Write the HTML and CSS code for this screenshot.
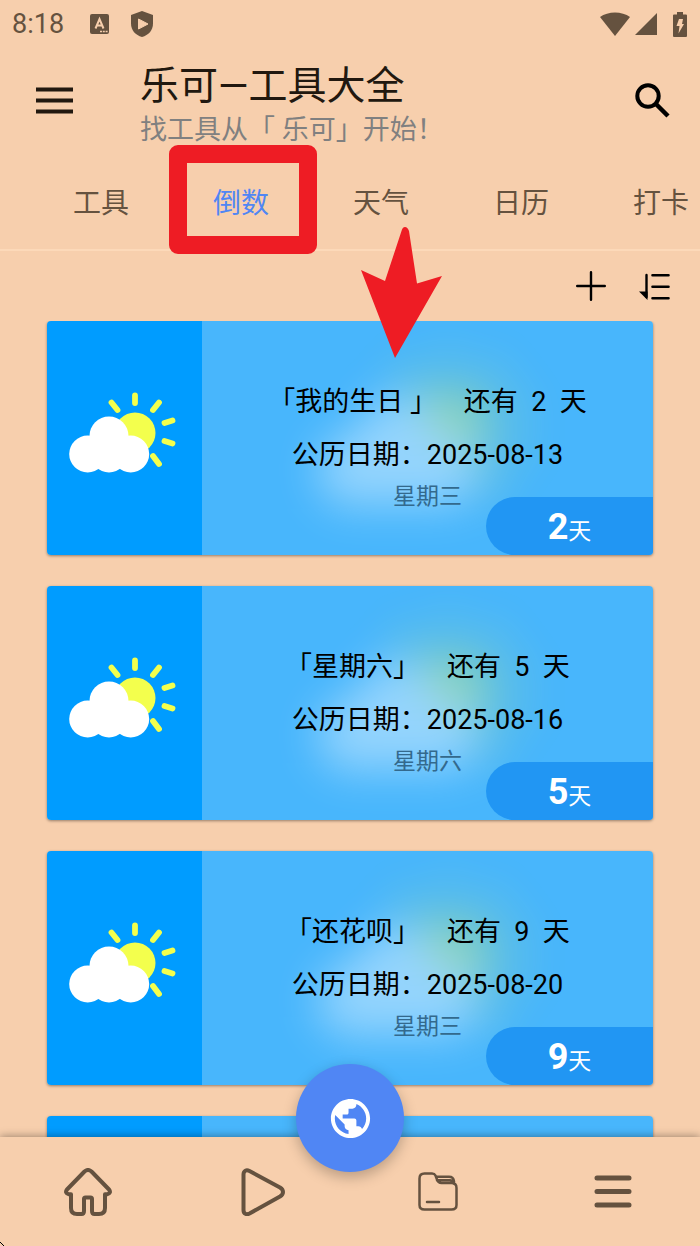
FILE: index.html
```html
<!DOCTYPE html>
<html lang="zh-CN">
<head>
<meta charset="utf-8">
<meta name="viewport" content="width=device-width, initial-scale=1">
<title>乐可—工具大全</title>
<link rel="stylesheet" href="styles.css">
</head>
<body>
<svg class="sprite" aria-hidden="true">
  <symbol id="weather" viewBox="0 0 111 92">
    <circle cx="66" cy="41" r="20.500" fill="#f3ff4d"/>
    <path d="M66 3.500v7.500M42.500 10.500l6 7.500M90 10.500l-6 7.500M103.500 28.500l-8 2.500M95.500 49l8 2.500M84 64l6 8" fill="none" stroke="#f3ff4d" stroke-width="5.800" stroke-linecap="round"/>
    <g fill="#fff"><circle cx="18.700" cy="62" r="18.500"/><circle cx="40" cy="44" r="19.500"/><circle cx="61.700" cy="62" r="18.500"/><circle cx="40" cy="62" r="18.500"/></g>
  </symbol>
</svg>
<div class="app">
  <div class="status">
    <span class="clock">8:18</span>
    <svg class="st-a" width="19" height="20" viewBox="0 0 19 20"><rect width="19" height="20" rx="2" fill="#65523f"/><path d="M5.500 14.500 9.500 5l4 9.500M7 11.500h5" fill="none" stroke="#f7cfad" stroke-width="2"/><path d="M10 17.500h8" stroke="#f7cfad" stroke-width="1.500" stroke-dasharray="2 .8"/></svg>
    <svg class="st-shield" width="24" height="28" viewBox="0 0 24 28"><path d="M12 1 23 5v8.500c0 7-4.500 11.500-11 13.500C5.500 25 1 20.500 1 13.500V5z" fill="#65523f"/><path d="M8.500 9v10l9.500-5z" fill="#f7cfad" stroke="#f7cfad" stroke-linejoin="round"/></svg>
    <svg class="st-wifi" width="30" height="24" viewBox="0 0 30 24"><path d="M0 5C8-1 22-1 30 5L15 24z" fill="#65523f"/></svg>
    <svg class="st-signal" width="22" height="22" viewBox="0 0 22 22"><path d="M22 0v22H0z" fill="#65523f"/></svg>
    <svg class="st-batt" width="14" height="25" viewBox="0 0 14 25"><path d="M4 0h6v2.500h3q1 0 1 1V24q0 1-1 1H1q-1 0-1-1V3.500q0-1 1-1h3z" fill="#65523f"/><path d="M6 7h4l-1 5h2L5.500 21.500 6.500 14H3.500z" fill="#f7cfad"/></svg>
  </div>
  <header class="header">
    <button class="icon-btn" aria-label="菜单"><svg width="37" height="27" viewBox="0 0 37 27"><path d="M0 2.500h37M0 13.500h37M0 24.500h37" stroke="#21180f" stroke-width="4"/></svg></button>
    <div class="heading">
      <h1>乐可—工具大全</h1>
      <p>找工具从「 乐可」开始&#xFF01;</p>
    </div>
    <button class="icon-btn" aria-label="搜索"><svg width="35" height="35" viewBox="0 0 35 35"><circle cx="13" cy="13" r="10.700" fill="none" stroke="#000" stroke-width="4"/><path d="M20.500 20.500 33 33" stroke="#000" stroke-width="4.500"/></svg></button>
  </header>
  <nav class="tabs">
    <a href="#tools">工具</a>
    <a href="#countdown" class="active" aria-current="page">倒数</a>
    <a href="#weather-tab">天气</a>
    <a href="#calendar">日历</a>
    <a href="#checkin">打卡</a>
  </nav>
  <div class="toolbar">
    <button class="icon-btn" aria-label="添加"><svg width="30" height="30" viewBox="0 0 30 30"><path d="M15 1.200v27.600M1.200 15h27.600" stroke="#000" stroke-width="2.400" stroke-linecap="round"/></svg></button>
    <button class="icon-btn" aria-label="排序"><svg width="31" height="27" viewBox="0 0 31 27"><path d="M13.500 2.200h16M13.500 13.700h16M13.500 25.200h16" stroke="#000" stroke-width="2.600" stroke-linecap="round"/><path d="M7.500 2v22" stroke="#000" stroke-width="2.400" stroke-linecap="round"/><path d="M0 18.500h8.500V27z" fill="#000"/></svg></button>
  </div>
  <main class="list">
    <article class="card">
      <div class="card-side"><svg class="weather"><use href="#weather"/></svg></div>
      <div class="card-main">
        <svg class="haze" aria-hidden="true"><use href="#weather"/></svg>
        <h2>「我的生日 」    还有  2  天</h2>
        <p class="date">公历日期&#xFF1A;2025-08-13</p>
        <p class="week">星期三</p>
        <div class="badge"><b>2</b><span>天</span></div>
      </div>
    </article>
    <article class="card">
      <div class="card-side"><svg class="weather"><use href="#weather"/></svg></div>
      <div class="card-main">
        <svg class="haze" aria-hidden="true"><use href="#weather"/></svg>
        <h2>「星期六」    还有  5  天</h2>
        <p class="date">公历日期&#xFF1A;2025-08-16</p>
        <p class="week">星期六</p>
        <div class="badge"><b>5</b><span>天</span></div>
      </div>
    </article>
    <article class="card">
      <div class="card-side"><svg class="weather"><use href="#weather"/></svg></div>
      <div class="card-main">
        <svg class="haze" aria-hidden="true"><use href="#weather"/></svg>
        <h2>「还花呗」    还有  9  天</h2>
        <p class="date">公历日期&#xFF1A;2025-08-20</p>
        <p class="week">星期三</p>
        <div class="badge"><b>9</b><span>天</span></div>
      </div>
    </article>
    <article class="card">
      <div class="card-side"></div>
      <div class="card-main"></div>
    </article>
  </main>
  <nav class="bottom">
    <a href="#home" aria-label="首页"><svg width="48" height="48" viewBox="0 0 48 48"><path d="M20.500 3.500q3.500-3 7 0L45 21.500q2.500 3.500-1.500 4.700H41V40q0 6-6 6h-4.500q-2.500 0-2.500-3V31q0-1.500-1.500-1.500h-5Q20 29.500 20 31V43q0 3-2.500 3H13q-6 0-6-6V26.200H4.500Q.500 25 3 21.500z"/></svg></a>
    <a href="#play" aria-label="播放"><svg width="44" height="48" viewBox="0 0 44 48"><path d="M2.500 6.500c0-4 3-5 6-3.500L39 19.500c4 2.500 4 6.500 0 9L8.500 45.500c-3 1.500-6 .5-6-3.500z"/></svg></a>
    <a href="#files" aria-label="文件"><svg class="fine" width="40" height="40" viewBox="0 0 40 40"><path d="M1.500 6.500q0-5 5-5h7.500q2.500 0 3.500 2l1.500 4q1 3.500 4.500 3.500h10q5 0 5 5V33q0 4.500-5 4.500H6.500q-5 0-5-4.500zM18 4.800H31q4.500 0 5 4.500v2.500M19 8.200H32q2.500 0 3 3M9 30h12"/></svg></a>
    <a href="#more" aria-label="更多"><svg class="bold" width="38" height="33" viewBox="0 0 38 33"><path d="M3 3h32M3 16.500h32M3 30h32"/></svg></a>
  </nav>
  <button class="fab" aria-label="浏览器"><svg width="47" height="47" viewBox="0 0 24 24"><path fill="#fff" d="M12 2C6.480 2 2 6.480 2 12s4.480 10 10 10 10-4.480 10-10S17.520 2 12 2zm-1 17.930c-3.950-.49-7-3.850-7-7.930 0-.62.080-1.210.210-1.790L9 15v1c0 1.100.9 2 2 2v1.930zm6.900-2.540c-.26-.81-1-1.390-1.900-1.390h-1v-3c0-.55-.45-1-1-1H8v-2h2c.55 0 1-.45 1-1V7h2c1.100 0 2-.9 2-2v-.41c2.930 1.190 5 4.060 5 7.410 0 2.080-.8 3.970-2.100 5.390z"/></svg></button>
  <div class="mark-box"></div>
  <svg class="mark-arrow" width="81" height="131" viewBox="0 0 81 131"><path d="M40.500 4Q41.500 0 44 0T48 4L56 56.500 81 49 34 131 0 43 24 54z" fill="#ee1c24"/></svg>
  <svg class="corner" width="4" height="4" viewBox="0 0 4 4"><path d="M0 0 4 4" stroke="#000"/></svg>
</div>
</body>
</html>
```
FILE: styles.css
```css
* {
  box-sizing: border-box;
  margin: 0;
  padding: 0;
}

body {
  background: #f7cfad;
  color: #000;
  font-family: Roboto, "Noto Sans CJK SC", sans-serif;
  font-weight: 400;
}

a {
  color: inherit;
  text-decoration: none;
}

button {
  border: 0;
  background: none;
  font: inherit;
}

svg {
  display: block;
}

.sprite {
  position: absolute;
  width: 0;
  height: 0;
}

.app {
  position: relative;
  display: flex;
  flex-direction: column;
  height: 100vh;
  overflow: hidden;
}

.status {
  display: flex;
  align-items: center;
  height: 48px;
  padding: 0 13px 0 12px;
  color: #65523f;
  flex: none;
}

.clock {
  font-size: 27px;
  line-height: 32px;
}

.st-a {
  margin-left: 26px;
}

.st-shield {
  margin-left: 21px;
}

.st-wifi {
  margin-left: auto;
}

.st-signal {
  margin-left: 5px;
}

.st-batt {
  margin-left: 16px;
}

.header {
  display: flex;
  align-items: center;
  height: 105px;
  padding: 0 30px 0 36px;
  flex: none;
}

.heading {
  flex: 1;
  margin-left: 67px;
  padding-top: 10px;
}

h1 {
  color: #21180f;
  font-size: 39px;
  font-weight: 400;
  line-height: 48px;
}

.heading p {
  color: #808080;
  font-size: 27px;
  line-height: 40px;
}

.tabs {
  display: flex;
  height: 98px;
  padding-left: 31px;
  border-bottom: 2px solid #fcd9b9;
  overflow: hidden;
  flex: none;
}

.tabs a {
  display: flex;
  flex: none;
  align-items: center;
  justify-content: center;
  width: 140px;
  color: #65523f;
  font-size: 28px;
}

.tabs .active {
  color: #5086f4;
}

.toolbar {
  display: flex;
  align-items: center;
  justify-content: flex-end;
  gap: 33px;
  height: 70px;
  padding-right: 30px;
  flex: none;
}

.list {
  display: flex;
  flex: 1;
  flex-direction: column;
  gap: 31px;
  min-height: 0;
  padding: 0 47px;
  overflow: hidden;
}

.card {
  display: flex;
  flex: none;
  height: 234px;
  border-radius: 4px;
  overflow: hidden;
  box-shadow: 0 1px 3px rgba(0, 0, 0, 0.4);
}

.card-side {
  display: flex;
  align-items: center;
  justify-content: center;
  width: 155px;
  background: #009cff;
}

.weather {
  width: 111px;
  height: 92px;
}

.card-main {
  position: relative;
  flex: 1;
  padding-top: 55px;
  background: #48b6fc;
  text-align: center;
  overflow: hidden;
}

.card-main h2,
.date {
  position: relative;
  font-size: 27px;
  font-weight: 400;
  line-height: 53px;
  white-space: pre;
}

.week {
  position: relative;
  color: #33698d;
  font-size: 23px;
  line-height: 30px;
}

.haze {
  position: absolute;
  top: 25px;
  left: 50%;
  width: 222px;
  height: 184px;
  margin-left: -111px;
  opacity: 0.42;
  filter: blur(22px);
  overflow: visible;
}

.badge {
  position: absolute;
  right: 0;
  bottom: 0;
  display: flex;
  align-items: baseline;
  justify-content: center;
  width: 167px;
  height: 58px;
  border-radius: 29px 0 0 29px;
  background: #2196f3;
  color: #fff;
  line-height: 60px;
}

.badge b {
  font-size: 36px;
  font-weight: 700;
}

.badge span {
  font-size: 23px;
}

.bottom {
  position: relative;
  display: flex;
  height: 109px;
  background: #f7cfad;
  box-shadow: 0 -1px 8px rgba(0, 0, 0, 0.35);
  flex: none;
}

.bottom a {
  display: flex;
  flex: 1;
  align-items: center;
  justify-content: center;
}

.bottom path {
  fill: none;
  stroke: #65523f;
  stroke-width: 4;
  stroke-linecap: round;
  stroke-linejoin: round;
}

.bottom .fine path {
  stroke-width: 2.5;
}

.bottom .bold path {
  stroke-width: 5;
}

.fab {
  position: absolute;
  bottom: 74px;
  left: 50%;
  display: flex;
  align-items: center;
  justify-content: center;
  width: 108px;
  height: 108px;
  margin-left: -54px;
  border-radius: 50%;
  background: #5086f4;
  box-shadow: 0 5px 14px rgba(0, 0, 0, 0.25);
}

.mark-box {
  position: absolute;
  top: 145px;
  left: 169px;
  width: 148px;
  height: 109px;
  border: 18px solid #ee1c24;
  border-radius: 9px;
  pointer-events: none;
}

.mark-arrow {
  position: absolute;
  top: 227px;
  left: 361px;
  pointer-events: none;
}

.corner {
  position: absolute;
  bottom: 0;
  left: 0;
}
```
